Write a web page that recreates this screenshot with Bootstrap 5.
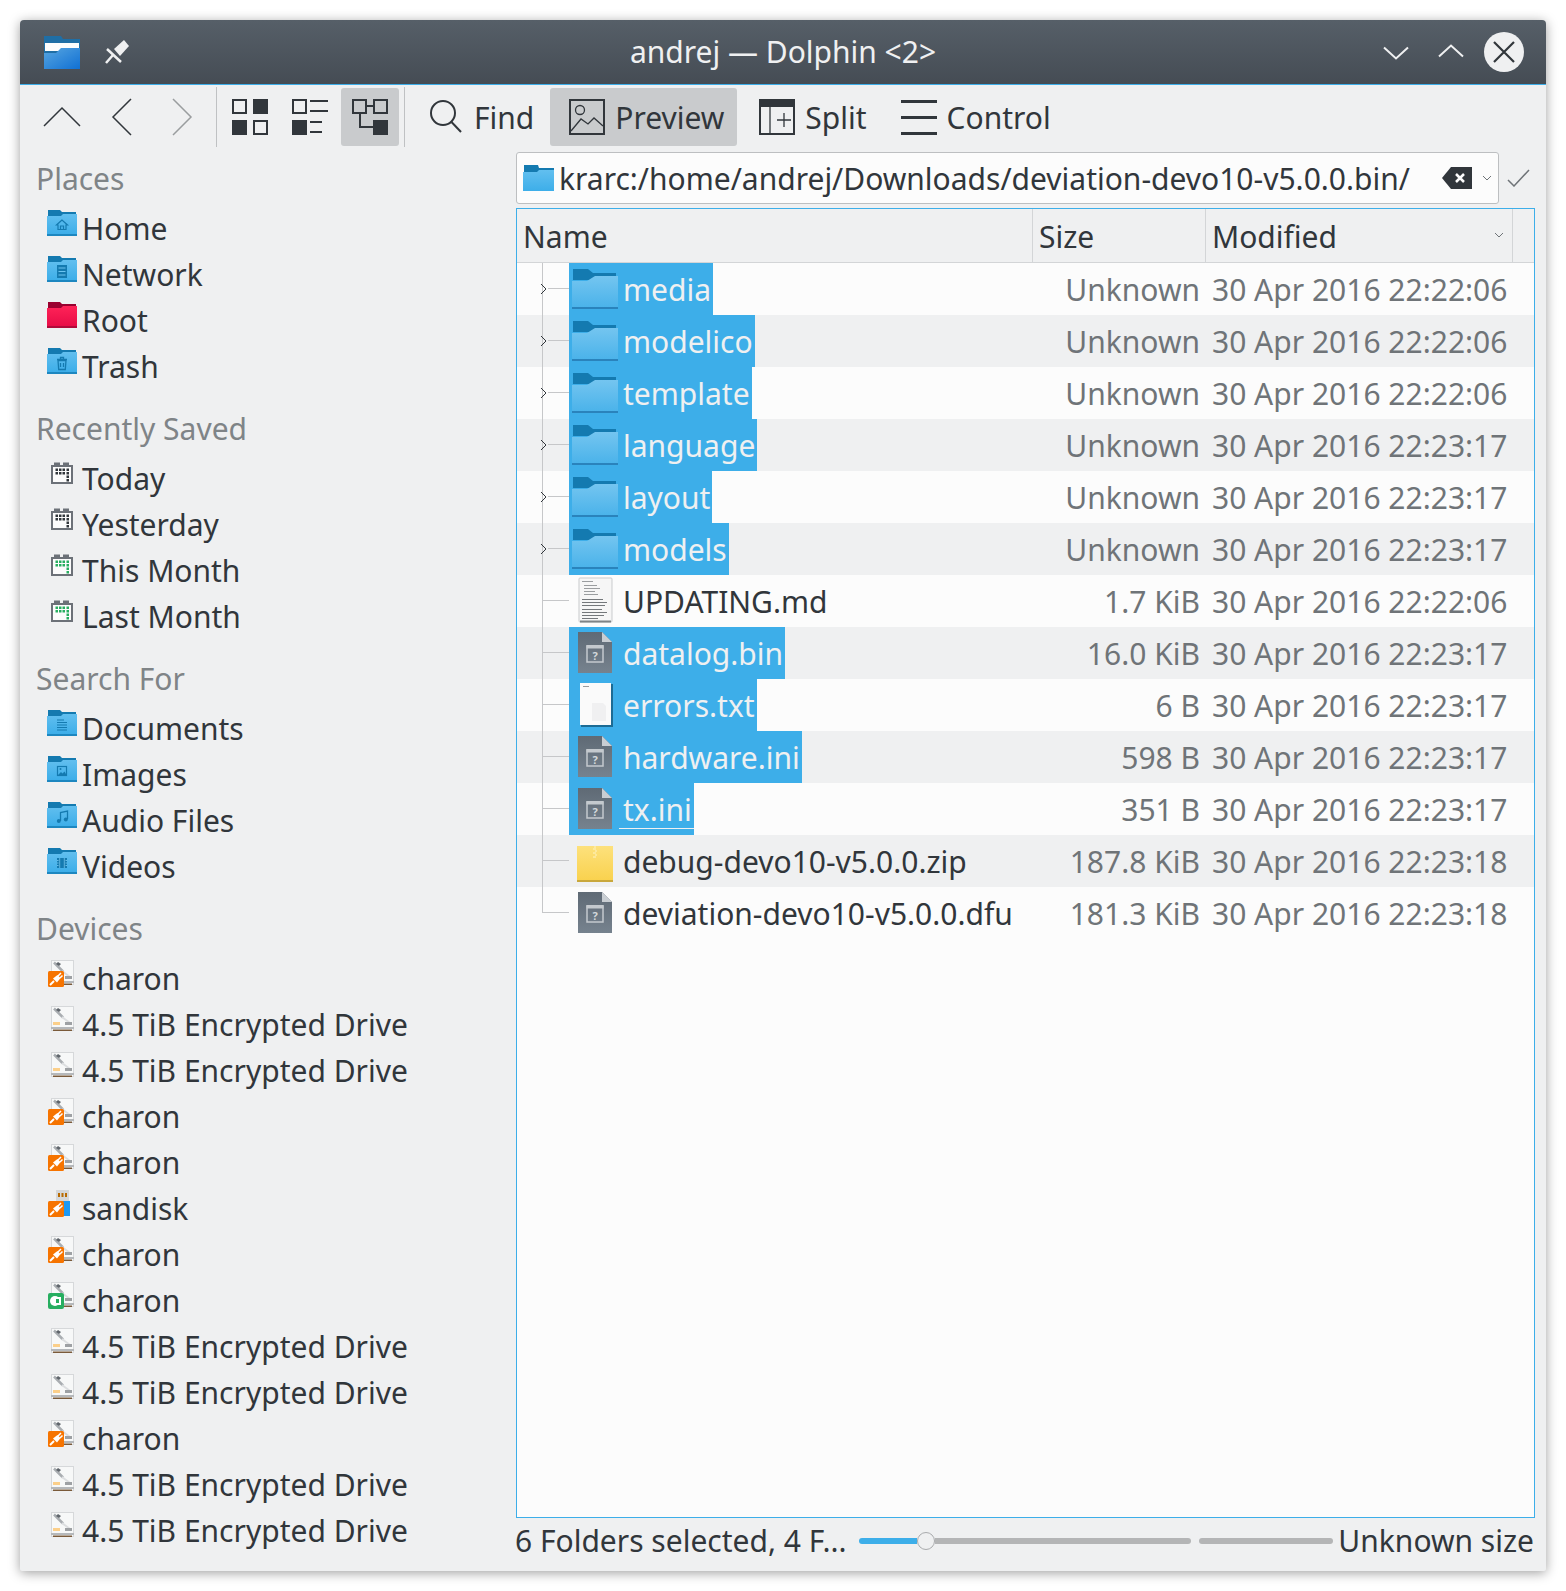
<!DOCTYPE html>
<html lang="en">
<head>
<meta charset="utf-8">
<title>andrej — Dolphin</title>
<link href="https://cdn.jsdelivr.net/npm/bootstrap@5.3.0/dist/css/bootstrap.min.css" rel="stylesheet">
<style>
html,body{height:1591px;background:#fff;}
body{margin:0;padding:20px;font-family:"Noto Sans","Open Sans",sans-serif;font-size:30px;color:#31363b;overflow:hidden;}
.svg-defs{display:block;width:0;height:0;overflow:hidden;}
.dw-window{width:1526px;height:1551px;background:#eff0f1;border-radius:4px 4px 2px 2px;box-shadow:0 2px 12px rgba(0,0,0,.38);overflow:hidden;}
.dw-title{height:65px;background:linear-gradient(#565f68,#454c54);border-bottom:1px solid #3daee9;color:#eff0f1;line-height:66px;}
.dw-side-l,.dw-side-r{flex:1 1 0;}
.dw-ttl{white-space:nowrap;}
.dw-app{margin-left:24px;margin-top:1px;}
.dw-pin{margin-left:25px;}
.dw-min{margin-top:2px;}
.dw-max{margin-left:29px;margin-top:-2px;}
.dw-close{margin-left:20px;margin-right:22px;}
.dw-toolbar{height:63px;padding-top:3px;}
.dw-sep{width:1px;height:60px;background:#bfc1c3;margin-top:-1px;}
.dw-sep2{margin-left:5px;}
.dw-tbtn{height:58px;border-radius:3px;line-height:60px;white-space:nowrap;}
.dw-active{background:#c9cbcd;}
.dw-find{margin-left:25px;}
.dw-prev{margin-left:16px;width:187px;}
.dw-split{margin-left:22px;}
.dw-ctrl{margin-left:34px;}
.dw-tx{margin-left:8px;}
.dw-tx-s{margin-left:10px;}
.dw-sidebar{width:496px;flex:none;padding-top:8px;}
.dw-head{height:46px;line-height:46px;padding-left:16px;color:#7f8487;margin-bottom:4px;}
.dw-group{margin-bottom:16px;}
.dw-item{height:46px;line-height:46px;padding-left:27px;white-space:nowrap;}
.dw-sico{width:35px;height:32px;margin-bottom:12px;flex:none;display:block;}
.dw-main{width:1019px;flex:none;}
.dw-loc-row{height:52px;margin-top:4px;}
.dw-loc{width:983px;height:52px;background:#fcfcfc;border:1px solid #bdbfc1;border-radius:3px;padding:0 6px;line-height:48px;}
.dw-path{margin-left:5px;padding-top:2px;}
.dw-clear{margin-right:10px;}
.dw-ok{margin-left:8px;}
.dw-panel{height:1310px;margin-top:4px;background:#fcfcfc;border:1px solid #3daee9;}
.dw-thead{height:54px;background:#eff0f1;border-bottom:1px solid #d3d5d7;line-height:56px;}
.dw-th1{width:516px;padding-left:6px;border-right:1px solid #d3d5d7;flex:none;}
.dw-th2{width:173px;padding-left:6px;border-right:1px solid #d3d5d7;flex:none;}
.dw-th3{width:307px;padding-left:6px;border-right:1px solid #d3d5d7;flex:none;}
.dw-th3-label{padding-top:2px;line-height:52px;}
.dw-sort{margin-right:8px;margin-top:-2px;}
.dw-row{height:52px;line-height:54px;background:#fcfcfc;}
.dw-row:nth-child(even){background:#eff0f1;}
.dw-tree{width:52px;height:52px;flex:none;}
.dw-tv{margin-left:25px;height:52px;border-left:1px solid #c6c7c9;position:relative;}
.dw-tv-end{border-left:0;}
.dw-th{height:26px;border-bottom:1px solid #c6c7c9;margin-left:0;}
.dw-tv-end .dw-th{border-left:1px solid #c6c7c9;}
.dw-tf{margin-left:5px;}
.dw-chev{position:absolute;left:-3px;top:20px;width:7px;height:12px;display:block;}
.dw-namecell{width:464px;flex:none;height:52px;white-space:nowrap;}
.dw-sel{background:#3daee9;color:#eff0f1;}
.dw-i52{width:52px;height:52px;display:block;flex:none;}
.dw-i46{width:46px;height:52px;display:block;flex:none;margin-left:6px;}
.dw-nm{padding:0 2px;height:52px;}
.dw-focus{margin-left:-2px;padding-left:4px;height:46px;border-bottom:1px solid #eff0f1;margin-bottom:6px;}
.dw-sz{width:173px;flex:none;text-align:right;padding-right:6px;color:#6f7478;white-space:nowrap;}
.dw-dt{flex:none;padding-left:6px;color:#6f7478;white-space:nowrap;}
.dw-status{height:53px;line-height:48px;white-space:nowrap;padding-bottom:8px;}
.dw-stext{width:344px;flex:none;margin-left:-1px;}
.dw-bar{height:6px;border-radius:3px;background:#b4b5b6;}
.dw-slider{width:332px;flex:none;}
.dw-fill{width:58px;height:6px;background:#3daee9;border-radius:3px 0 0 3px;}
.dw-rest{flex:1 1 auto;height:6px;background:#b4b5b6;border-radius:0 3px 3px 0;}
.dw-knob{width:18px;height:18px;border-radius:50%;background:#eff0f1;border:1px solid #a9abad;flex:none;}
.dw-bar2{width:134px;margin-left:8px;flex:none;}
.dw-unk{margin-left:auto;margin-right:1px;}
</style>
</head>
<body>
<svg class="svg-defs" aria-hidden="true">
<defs>
<linearGradient id="gF" x1="0" y1="0" x2="0" y2="1"><stop offset="0" stop-color="#62bfef"/><stop offset="1" stop-color="#3daee9"/></linearGradient>
<linearGradient id="gR" x1="0" y1="0" x2="0" y2="1"><stop offset="0" stop-color="#ff2358"/><stop offset="1" stop-color="#e80d47"/></linearGradient>
<linearGradient id="gB" x1="0" y1="0" x2="0" y2="1"><stop offset="0" stop-color="#5f6a75"/><stop offset="1" stop-color="#76828e"/></linearGradient>
<linearGradient id="gZ" x1="0" y1="0" x2="0" y2="1"><stop offset="0" stop-color="#fde17c"/><stop offset="1" stop-color="#f9d14c"/></linearGradient>
<linearGradient id="gA" x1="0" y1="0" x2="1" y2="1"><stop offset="0" stop-color="#58a6e0"/><stop offset="1" stop-color="#1070d4"/></linearGradient>
<linearGradient id="gS" x1="0" y1="0" x2="0" y2="1"><stop offset="0" stop-color="#74c5f0"/><stop offset="1" stop-color="#4bb3ea"/></linearGradient>
<symbol id="f-base" viewBox="0 0 35 32">
<path d="M1 3h12l2 2h14v4H1z" fill="#147ab0"/><path d="M0 9h14l2-2h14v20H0z" fill="url(#gF)"/><rect x="0" y="27" width="30" height="2" fill="#1d87c0"/>
</symbol>
<symbol id="f-red" viewBox="0 0 35 32">
<path d="M1 3h12l2 2h14v4H1z" fill="#99002f"/><path d="M0 9h14l2-2h14v20H0z" fill="url(#gR)"/><rect x="0" y="27" width="30" height="2" fill="#b00a3a"/>
</symbol>
<symbol id="s-home" viewBox="0 0 35 32"><use href="#f-base"/><path d="M15 13l-5.500 5H11v4.500h8V18h1.500zM13.500 22v-3h3v3" fill="none" stroke="#147ab0" stroke-width="1.200"/></symbol>
<symbol id="s-net" viewBox="0 0 35 32"><use href="#f-base"/><rect x="10" y="12" width="10" height="13" fill="#147ab0"/><path d="M11.500 15h7M11.500 18.500h7M11.500 22h7" stroke="#6cc4f0" stroke-width="1"/></symbol>
<symbol id="s-trash" viewBox="0 0 35 32"><use href="#f-base"/><path d="M11 15.500h8l-.7 9h-6.600zM10 14.500h10M13.500 14.500v-2h3v2M13.500 18v4M16.500 18v4" fill="none" stroke="#147ab0" stroke-width="1.300"/></symbol>
<symbol id="s-docs" viewBox="0 0 35 32"><use href="#f-base"/><path d="M10 13h7M10 15.500h10M10 18h10M10 20.500h10M10 23h10" stroke="#147ab0" stroke-width="1.100"/></symbol>
<symbol id="s-img" viewBox="0 0 35 32"><use href="#f-base"/><rect x="10.500" y="13.500" width="9" height="9" fill="none" stroke="#147ab0" stroke-width="1.200"/><path d="M11 22l3-3 1.500 1.500 2-2 2 3.500z" fill="#147ab0"/><circle cx="13.500" cy="16" r="1" fill="#147ab0"/></symbol>
<symbol id="s-audio" viewBox="0 0 35 32"><use href="#f-base"/><path d="M13.500 22v-8.500l7-1.500v8" fill="none" stroke="#147ab0" stroke-width="1.300"/><circle cx="11.800" cy="22" r="2" fill="#147ab0"/><circle cx="18.800" cy="20.500" r="2" fill="#147ab0"/></symbol>
<symbol id="s-video" viewBox="0 0 35 32"><use href="#f-base"/><rect x="10" y="13" width="10" height="10" fill="#147ab0"/><path d="M12.700 13v10M17.300 13v10" stroke="#7fcdf2" stroke-width=".7"/><path d="M10 15.500h1.500M10 18h1.500M10 20.500h1.500M18.500 15.500H20M18.500 18H20M18.500 20.500H20" stroke="#7fcdf2" stroke-width=".8"/></symbol>
<symbol id="s-cal" viewBox="0 0 35 32">
<path d="M6 9h18v17H6z" fill="#fcfcfc"/><path d="M5 9h20v17H5z" fill="none" stroke="#6c7178" stroke-width="2"/><path d="M7 5.500h6v3.500H7zM16 5.500h6v3.500h-6z" fill="#6c7178"/><rect x="5" y="8" width="20" height="2" fill="#6c7178"/>
<g fill="#31363b"><rect x="8.500" y="11.500" width="2.500" height="2.500"/><rect x="12" y="11.500" width="2.500" height="2.500"/><rect x="15.500" y="11.500" width="2.500" height="2.500"/><rect x="19.500" y="11.500" width="2.500" height="2.500"/><rect x="8.500" y="15" width="2.500" height="2.500"/><rect x="12" y="15" width="2.500" height="2.500"/><rect x="15.500" y="15" width="2.500" height="2.500"/><rect x="19.500" y="15" width="2.500" height="2.500"/><rect x="19.500" y="18.500" width="2.500" height="2.500"/><rect x="19.500" y="22" width="2.500" height="2.500"/></g>
</symbol>
<symbol id="s-calg" viewBox="0 0 35 32">
<path d="M6 9h18v17H6z" fill="#fcfcfc"/><path d="M5 9h20v17H5z" fill="none" stroke="#6c7178" stroke-width="2"/><path d="M7 5.500h6v3.500H7zM16 5.500h6v3.500h-6z" fill="#6c7178"/><rect x="5" y="8" width="20" height="2" fill="#6c7178"/>
<g fill="#27ae60"><rect x="8.500" y="11.500" width="2.500" height="2.500"/><rect x="12" y="11.500" width="2.500" height="2.500"/><rect x="15.500" y="11.500" width="2.500" height="2.500"/><rect x="19.500" y="11.500" width="2.500" height="2.500"/><rect x="8.500" y="15" width="2.500" height="2.500"/><rect x="12" y="15" width="2.500" height="2.500"/><rect x="15.500" y="15" width="2.500" height="2.500"/><rect x="19.500" y="15" width="2.500" height="2.500"/><rect x="19.500" y="18.500" width="2.500" height="2.500"/><rect x="19.500" y="22" width="2.500" height="2.500"/></g>
</symbol>
<symbol id="s-drive" viewBox="0 0 35 32">
<rect x="4.500" y="3.500" width="22" height="24" fill="#f7f8f8" stroke="#d6d8da"/>
<path d="M7 5.500l9 9" stroke="#a9adb1" stroke-width="2.500"/><path d="M9 7l2-2 3 2-2 2z" fill="#5f656b"/><path d="M15 14l8 6" stroke="#dcdee0" stroke-width="2"/>
<rect x="18" y="19" width="7" height="3" fill="#9ea1a4"/><rect x="6" y="19" width="7" height="3" fill="#fbcf8a"/>
<rect x="4" y="24" width="23" height="2" fill="#b5b8bb"/><rect x="6" y="26.500" width="19" height="1.500" fill="#7a5a3a"/>
</symbol>
<symbol id="b-plug" viewBox="0 0 35 32">
<rect x="1" y="14" width="16" height="16" rx="1.500" fill="#f67400"/>
<path d="M3 28l4-4" stroke="#fff" stroke-width="2"/><path d="M6 21.500l4.500-3.500 3 3-3.500 4.500z" fill="#fff"/><path d="M11 19l3-3M13 21l2.500-2.500" stroke="#fff" stroke-width="1.500"/>
</symbol>
<symbol id="s-mount" viewBox="0 0 35 32"><use href="#s-drive"/><use href="#b-plug"/></symbol>
<symbol id="s-green" viewBox="0 0 35 32"><use href="#s-drive"/><rect x="1" y="14" width="16" height="16" rx="2" fill="#27ae60"/><circle cx="8" cy="22" r="5" fill="#fff"/><rect x="9" y="18" width="5" height="8" fill="#fff"/><rect x="9" y="20" width="3" height="4" fill="#27ae60"/></symbol>
<symbol id="s-usb" viewBox="0 0 35 32">
<rect x="9" y="3" width="13" height="15" fill="#d5d7d9"/><rect x="11" y="6" width="2" height="4" fill="#b86a00"/><rect x="14.500" y="6" width="2" height="4" fill="#b86a00"/><rect x="18" y="6" width="2" height="4" fill="#b86a00"/>
<rect x="9" y="14" width="14" height="15" fill="#1d99f3"/><use href="#b-plug"/>
</symbol>
<symbol id="t-fld" viewBox="0 0 52 52">
<path d="M4 6h15l5 4h23v7H4z" fill="#147ab0"/><path d="M3 18h15l8-5h23v31H3z" fill="url(#gS)"/><rect x="3" y="44" width="46" height="2" fill="#2a83bc"/>
</symbol>
<symbol id="t-bin" viewBox="0 0 52 52">
<path d="M9 5h24l10 10v31H9z" fill="url(#gB)"/><path d="M33 5l10 10H33z" fill="#c9ced3"/>
<rect x="18" y="19" width="16" height="16" fill="none" stroke="#c4c9ce" stroke-width="1.500"/><rect x="17.500" y="18" width="17" height="3.500" fill="#c4c9ce"/>
<text x="26" y="33" text-anchor="middle" font-size="11" font-weight="700" font-family="Noto Sans" fill="#d4d8dc">?</text>
</symbol>
</defs>
</svg>
<div class="dw-window d-flex flex-column">
  <header class="dw-title d-flex align-items-center">
    <div class="dw-side-l d-flex align-items-center">
      <svg class="dw-app" width="36" height="33" viewBox="0 0 36 33"><path d="M0 0h17l2 3h17v30H0z" fill="#1f6ea5"/><rect x="1" y="7" width="34" height="8" fill="#fcfcfc"/><path d="M0 17h12l5-5h19v21H0z" fill="url(#gA)"/></svg>
      <svg class="dw-pin" width="25" height="24" viewBox="0 0 25 24"><path d="M19 0l5 6-9 10-6-7z" fill="#eff0f1"/><path d="M1 23l7-8M2 9l14 13" stroke="#eff0f1" stroke-width="2.500"/></svg>
    </div>
    <div class="dw-ttl">andrej — Dolphin &lt;2&gt;</div>
    <div class="dw-side-r d-flex align-items-center justify-content-end">
      <svg class="dw-min" width="26" height="14" viewBox="0 0 26 14"><path d="M1 1.500L13 12.500 25 1.500" fill="none" stroke="#eff0f1" stroke-width="2"/></svg>
      <svg class="dw-max" width="26" height="14" viewBox="0 0 26 14"><path d="M1 12.500L13 1.500l12 11" fill="none" stroke="#eff0f1" stroke-width="2"/></svg>
      <svg class="dw-close" width="40" height="40" viewBox="0 0 40 40"><circle cx="20" cy="20" r="20" fill="#eff0f1"/><path d="M10 10l20 20M30 10L10 30" stroke="#31363b" stroke-width="2.200"/></svg>
    </div>
  </header>
  <div class="dw-toolbar d-flex align-items-start">
    <button class="btn p-0 border-0 dw-tb" type="button" aria-label="Up"><svg class="d-block" width="196" height="58" viewBox="0 0 196 58"><g fill="none" stroke="#31363b" stroke-width="1.500"><path d="M24 38l18-18 18 18"/><path d="M111 11L93 29l18 18"/></g><path d="M153 11l18 18-18 18" fill="none" stroke="#9a9d9f" stroke-width="1.500"/></svg></button>
    <div class="dw-sep"></div>
    <svg class="d-block" width="124" height="58" viewBox="0 0 124 58"><g fill="#31363b"><path fill-rule="evenodd" d="M15 11h15v15H15zM17 13v11h11V13z"/><rect x="36" y="11" width="15" height="15"/><rect x="15" y="32" width="15" height="15"/><path fill-rule="evenodd" d="M36 32h15v15H36zM38 34v11h11V34z"/>
    <path fill-rule="evenodd" d="M75 11h15v15H75zM77 13v11h11V13z"/><rect x="75" y="32" width="15" height="15"/><rect x="93" y="12" width="18" height="2"/><rect x="93" y="22" width="18" height="2"/><rect x="93" y="33" width="12" height="2"/><rect x="93" y="43" width="12" height="2"/></g></svg>
    <div class="dw-tbtn dw-active"><svg class="d-block" width="58" height="58" viewBox="0 0 58 58"><g fill="#31363b"><path fill-rule="evenodd" d="M11 11h15v15H11zM13 13v11h11V13z"/><path fill-rule="evenodd" d="M32 11h15v15H32zM34 13v11h11V13z"/><rect x="32" y="32" width="15" height="15"/></g><path d="M26 18h6M19 26v13h13" fill="none" stroke="#31363b" stroke-width="2"/></svg></div>
    <div class="dw-sep dw-sep2"></div>
    <div class="dw-tbtn d-flex dw-find"><svg class="d-block" width="36" height="58" viewBox="0 0 36 58"><circle cx="13" cy="25" r="12" fill="none" stroke="#31363b" stroke-width="2"/><path d="M21.500 34L31 44" stroke="#31363b" stroke-width="2"/></svg><span class="dw-tx">Find</span></div>
    <div class="dw-tbtn dw-active d-flex dw-prev"><svg class="d-block" width="65" height="58" viewBox="0 0 65 58"><rect x="20" y="12" width="34" height="34" fill="none" stroke="#31363b" stroke-width="2"/><circle cx="30" cy="22" r="4.500" fill="none" stroke="#31363b" stroke-width="1.300"/><path d="M21 43l10-12 7 5 6-6 9 8" fill="none" stroke="#31363b" stroke-width="1.300"/></svg><span>Preview</span></div>
    <div class="dw-tbtn d-flex dw-split"><svg class="d-block" width="36" height="58" viewBox="0 0 36 58"><rect x="1" y="12" width="34" height="34" fill="none" stroke="#31363b" stroke-width="2"/><rect x="0" y="11" width="36" height="8" fill="#31363b"/><path d="M11 18v28M18 32h14M25 25v14" fill="none" stroke="#31363b" stroke-width="1.300"/></svg><span class="dw-tx-s">Split</span></div>
    <div class="dw-tbtn d-flex dw-ctrl"><svg class="d-block" width="36" height="58" viewBox="0 0 36 58"><rect y="12" width="36" height="3" fill="#31363b"/><rect y="28" width="36" height="3" fill="#31363b"/><rect y="44" width="36" height="3" fill="#31363b"/></svg><span class="dw-tx-s">Control</span></div>
  </div>
  <div class="d-flex flex-grow-1">
    <aside class="dw-sidebar">
      <section class="dw-group">
        <div class="dw-head">Places</div>
        <div class="dw-item d-flex align-items-center"><svg class="dw-sico"><use href="#s-home"/></svg>Home</div>
        <div class="dw-item d-flex align-items-center"><svg class="dw-sico"><use href="#s-net"/></svg>Network</div>
        <div class="dw-item d-flex align-items-center"><svg class="dw-sico"><use href="#f-red"/></svg>Root</div>
        <div class="dw-item d-flex align-items-center"><svg class="dw-sico"><use href="#s-trash"/></svg>Trash</div>
      </section>
      <section class="dw-group">
        <div class="dw-head">Recently Saved</div>
        <div class="dw-item d-flex align-items-center"><svg class="dw-sico"><use href="#s-cal"/></svg>Today</div>
        <div class="dw-item d-flex align-items-center"><svg class="dw-sico"><use href="#s-cal"/></svg>Yesterday</div>
        <div class="dw-item d-flex align-items-center"><svg class="dw-sico"><use href="#s-calg"/></svg>This Month</div>
        <div class="dw-item d-flex align-items-center"><svg class="dw-sico"><use href="#s-calg"/></svg>Last Month</div>
      </section>
      <section class="dw-group">
        <div class="dw-head">Search For</div>
        <div class="dw-item d-flex align-items-center"><svg class="dw-sico"><use href="#s-docs"/></svg>Documents</div>
        <div class="dw-item d-flex align-items-center"><svg class="dw-sico"><use href="#s-img"/></svg>Images</div>
        <div class="dw-item d-flex align-items-center"><svg class="dw-sico"><use href="#s-audio"/></svg>Audio Files</div>
        <div class="dw-item d-flex align-items-center"><svg class="dw-sico"><use href="#s-video"/></svg>Videos</div>
      </section>
      <section class="dw-group">
        <div class="dw-head">Devices</div>
        <div class="dw-item d-flex align-items-center"><svg class="dw-sico"><use href="#s-mount"/></svg>charon</div>
        <div class="dw-item d-flex align-items-center"><svg class="dw-sico"><use href="#s-drive"/></svg>4.5 TiB Encrypted Drive</div>
        <div class="dw-item d-flex align-items-center"><svg class="dw-sico"><use href="#s-drive"/></svg>4.5 TiB Encrypted Drive</div>
        <div class="dw-item d-flex align-items-center"><svg class="dw-sico"><use href="#s-mount"/></svg>charon</div>
        <div class="dw-item d-flex align-items-center"><svg class="dw-sico"><use href="#s-mount"/></svg>charon</div>
        <div class="dw-item d-flex align-items-center"><svg class="dw-sico"><use href="#s-usb"/></svg>sandisk</div>
        <div class="dw-item d-flex align-items-center"><svg class="dw-sico"><use href="#s-mount"/></svg>charon</div>
        <div class="dw-item d-flex align-items-center"><svg class="dw-sico"><use href="#s-green"/></svg>charon</div>
        <div class="dw-item d-flex align-items-center"><svg class="dw-sico"><use href="#s-drive"/></svg>4.5 TiB Encrypted Drive</div>
        <div class="dw-item d-flex align-items-center"><svg class="dw-sico"><use href="#s-drive"/></svg>4.5 TiB Encrypted Drive</div>
        <div class="dw-item d-flex align-items-center"><svg class="dw-sico"><use href="#s-mount"/></svg>charon</div>
        <div class="dw-item d-flex align-items-center"><svg class="dw-sico"><use href="#s-drive"/></svg>4.5 TiB Encrypted Drive</div>
        <div class="dw-item d-flex align-items-center"><svg class="dw-sico"><use href="#s-drive"/></svg>4.5 TiB Encrypted Drive</div>
      </section>
    </aside>
    <main class="dw-main">
      <div class="dw-loc-row d-flex align-items-center">
        <div class="dw-loc d-flex align-items-center">
          <svg width="31" height="26" viewBox="0 0 31 26"><path d="M1 0h14l1 3h15v23H1z" fill="#147ab0"/><path d="M0 7h14l2-2h15v21H0z" fill="url(#gF)"/></svg>
          <span class="flex-grow-1 dw-path">krarc:/home/andrej/Downloads/deviation-devo10-v5.0.0.bin/</span>
          <svg class="dw-clear" width="30" height="24" viewBox="0 0 30 24"><path d="M9 1h21v22H9L0 12z" fill="#31363b"/><path d="M14 8l8 8M22 8l-8 8" stroke="#fcfcfc" stroke-width="2.500"/></svg>
          <svg width="10" height="6" viewBox="0 0 10 6"><path d="M1 1l4 4 4-4" fill="none" stroke="#6f7478"/></svg>
        </div>
        <svg class="dw-ok" width="23" height="18" viewBox="0 0 23 18"><path d="M1 11l6 6L22 1" fill="none" stroke="#6f7478" stroke-width="1.500"/></svg>
      </div>
      <div class="dw-panel">
        <div class="dw-thead d-flex">
          <div class="dw-th1">Name</div>
          <div class="dw-th2">Size</div>
          <div class="dw-th3 d-flex justify-content-between align-items-center"><span class="dw-th3-label">Modified</span><svg class="dw-sort" width="10" height="6" viewBox="0 0 10 6"><path d="M1 1l4 4 4-4" fill="none" stroke="#6f7478"/></svg></div>
        </div>
        <div class="dw-rows">
          <div class="dw-row d-flex"><div class="dw-tree"><div class="dw-tv"><div class="dw-th dw-tf"></div><svg class="dw-chev" viewBox="0 0 7 12"><path d="M1 1l5 5-5 5" fill="none" stroke="#31363b"/></svg></div></div><div class="dw-namecell"><div class="dw-sel d-inline-flex"><svg class="dw-i52"><use href="#t-fld"/></svg><span class="dw-nm">media</span></div></div><div class="dw-sz">Unknown</div><div class="dw-dt">30 Apr 2016 22:22:06</div></div>
          <div class="dw-row d-flex"><div class="dw-tree"><div class="dw-tv"><div class="dw-th dw-tf"></div><svg class="dw-chev" viewBox="0 0 7 12"><path d="M1 1l5 5-5 5" fill="none" stroke="#31363b"/></svg></div></div><div class="dw-namecell"><div class="dw-sel d-inline-flex"><svg class="dw-i52"><use href="#t-fld"/></svg><span class="dw-nm">modelico</span></div></div><div class="dw-sz">Unknown</div><div class="dw-dt">30 Apr 2016 22:22:06</div></div>
          <div class="dw-row d-flex"><div class="dw-tree"><div class="dw-tv"><div class="dw-th dw-tf"></div><svg class="dw-chev" viewBox="0 0 7 12"><path d="M1 1l5 5-5 5" fill="none" stroke="#31363b"/></svg></div></div><div class="dw-namecell"><div class="dw-sel d-inline-flex"><svg class="dw-i52"><use href="#t-fld"/></svg><span class="dw-nm">template</span></div></div><div class="dw-sz">Unknown</div><div class="dw-dt">30 Apr 2016 22:22:06</div></div>
          <div class="dw-row d-flex"><div class="dw-tree"><div class="dw-tv"><div class="dw-th dw-tf"></div><svg class="dw-chev" viewBox="0 0 7 12"><path d="M1 1l5 5-5 5" fill="none" stroke="#31363b"/></svg></div></div><div class="dw-namecell"><div class="dw-sel d-inline-flex"><svg class="dw-i52"><use href="#t-fld"/></svg><span class="dw-nm">language</span></div></div><div class="dw-sz">Unknown</div><div class="dw-dt">30 Apr 2016 22:23:17</div></div>
          <div class="dw-row d-flex"><div class="dw-tree"><div class="dw-tv"><div class="dw-th dw-tf"></div><svg class="dw-chev" viewBox="0 0 7 12"><path d="M1 1l5 5-5 5" fill="none" stroke="#31363b"/></svg></div></div><div class="dw-namecell"><div class="dw-sel d-inline-flex"><svg class="dw-i52"><use href="#t-fld"/></svg><span class="dw-nm">layout</span></div></div><div class="dw-sz">Unknown</div><div class="dw-dt">30 Apr 2016 22:23:17</div></div>
          <div class="dw-row d-flex"><div class="dw-tree"><div class="dw-tv"><div class="dw-th dw-tf"></div><svg class="dw-chev" viewBox="0 0 7 12"><path d="M1 1l5 5-5 5" fill="none" stroke="#31363b"/></svg></div></div><div class="dw-namecell"><div class="dw-sel d-inline-flex"><svg class="dw-i52"><use href="#t-fld"/></svg><span class="dw-nm">models</span></div></div><div class="dw-sz">Unknown</div><div class="dw-dt">30 Apr 2016 22:23:17</div></div>
          <div class="dw-row d-flex"><div class="dw-tree"><div class="dw-tv"><div class="dw-th"></div></div></div><div class="dw-namecell d-inline-flex"><svg class="dw-i52" viewBox="0 0 52 52"><rect x="10" y="3" width="33" height="44" rx="1" fill="#f6f6f6" stroke="#c9cbcd"/><rect x="11" y="45.500" width="31" height="2" fill="#7f8487"/><g fill="#9a9d9f"><rect x="13" y="6" width="11" height="1"/><rect x="15" y="10" width="13" height="1"/><rect x="15" y="13" width="16" height="1"/><rect x="15" y="16" width="11" height="1"/><rect x="15" y="19" width="14" height="1"/></g><g fill="#74787b"><rect x="13" y="24" width="21" height="1"/><rect x="13" y="27" width="25" height="1"/><rect x="13" y="30" width="23" height="1"/><rect x="13" y="34" width="20" height="1"/><rect x="13" y="37" width="25" height="1"/><rect x="13" y="40" width="22" height="1"/><rect x="13" y="43" width="16" height="1"/></g></svg><span class="dw-nm">UPDATING.md</span></div><div class="dw-sz">1.7 KiB</div><div class="dw-dt">30 Apr 2016 22:22:06</div></div>
          <div class="dw-row d-flex"><div class="dw-tree"><div class="dw-tv"><div class="dw-th"></div></div></div><div class="dw-namecell"><div class="dw-sel d-inline-flex"><svg class="dw-i52"><use href="#t-bin"/></svg><span class="dw-nm">datalog.bin</span></div></div><div class="dw-sz">16.0 KiB</div><div class="dw-dt">30 Apr 2016 22:23:17</div></div>
          <div class="dw-row d-flex"><div class="dw-tree"><div class="dw-tv"><div class="dw-th"></div></div></div><div class="dw-namecell"><div class="dw-sel d-inline-flex"><svg class="dw-i46" viewBox="0 0 46 52"><rect x="6" y="5" width="32" height="43" fill="#1c6b94"/><rect x="5" y="4" width="31" height="42" fill="#fafafa"/><rect x="8" y="7" width="6" height="1" fill="#9a9c9e"/><path d="M17 24h11l3 3v15H17z" fill="#f0f0f1"/></svg><span class="dw-nm">errors.txt</span></div></div><div class="dw-sz">6 B</div><div class="dw-dt">30 Apr 2016 22:23:17</div></div>
          <div class="dw-row d-flex"><div class="dw-tree"><div class="dw-tv"><div class="dw-th"></div></div></div><div class="dw-namecell"><div class="dw-sel d-inline-flex"><svg class="dw-i52"><use href="#t-bin"/></svg><span class="dw-nm">hardware.ini</span></div></div><div class="dw-sz">598 B</div><div class="dw-dt">30 Apr 2016 22:23:17</div></div>
          <div class="dw-row d-flex"><div class="dw-tree"><div class="dw-tv"><div class="dw-th"></div></div></div><div class="dw-namecell"><div class="dw-sel d-inline-flex"><svg class="dw-i52"><use href="#t-bin"/></svg><span class="dw-nm dw-focus">tx.ini</span></div></div><div class="dw-sz">351 B</div><div class="dw-dt">30 Apr 2016 22:23:17</div></div>
          <div class="dw-row d-flex"><div class="dw-tree"><div class="dw-tv"><div class="dw-th"></div></div></div><div class="dw-namecell d-inline-flex"><svg class="dw-i52" viewBox="0 0 52 52"><rect x="8" y="11" width="36" height="36" fill="url(#gZ)"/><rect x="8" y="45" width="36" height="2" fill="#c9a83c"/><path d="M26 11v2M24 14h3M26 16h2M24 18h3M26 20h2M24 22h3" stroke="#fdf3c4" stroke-width="1"/></svg><span class="dw-nm">debug-devo10-v5.0.0.zip</span></div><div class="dw-sz">187.8 KiB</div><div class="dw-dt">30 Apr 2016 22:23:18</div></div>
          <div class="dw-row d-flex"><div class="dw-tree"><div class="dw-tv dw-tv-end"><div class="dw-th"></div></div></div><div class="dw-namecell d-inline-flex"><svg class="dw-i52"><use href="#t-bin"/></svg><span class="dw-nm">deviation-devo10-v5.0.0.dfu</span></div><div class="dw-sz">181.3 KiB</div><div class="dw-dt">30 Apr 2016 22:23:18</div></div>
        </div>
      </div>
      <div class="dw-status d-flex align-items-center">
        <div class="dw-stext">6 Folders selected, 4 F...</div>
        <div class="dw-slider d-flex align-items-center"><div class="dw-fill"></div><div class="dw-knob"></div><div class="dw-rest"></div></div>
        <div class="dw-bar dw-bar2"></div>
        <div class="dw-unk">Unknown size</div>
      </div>
    </main>
  </div>
</div>
</body>
</html>
